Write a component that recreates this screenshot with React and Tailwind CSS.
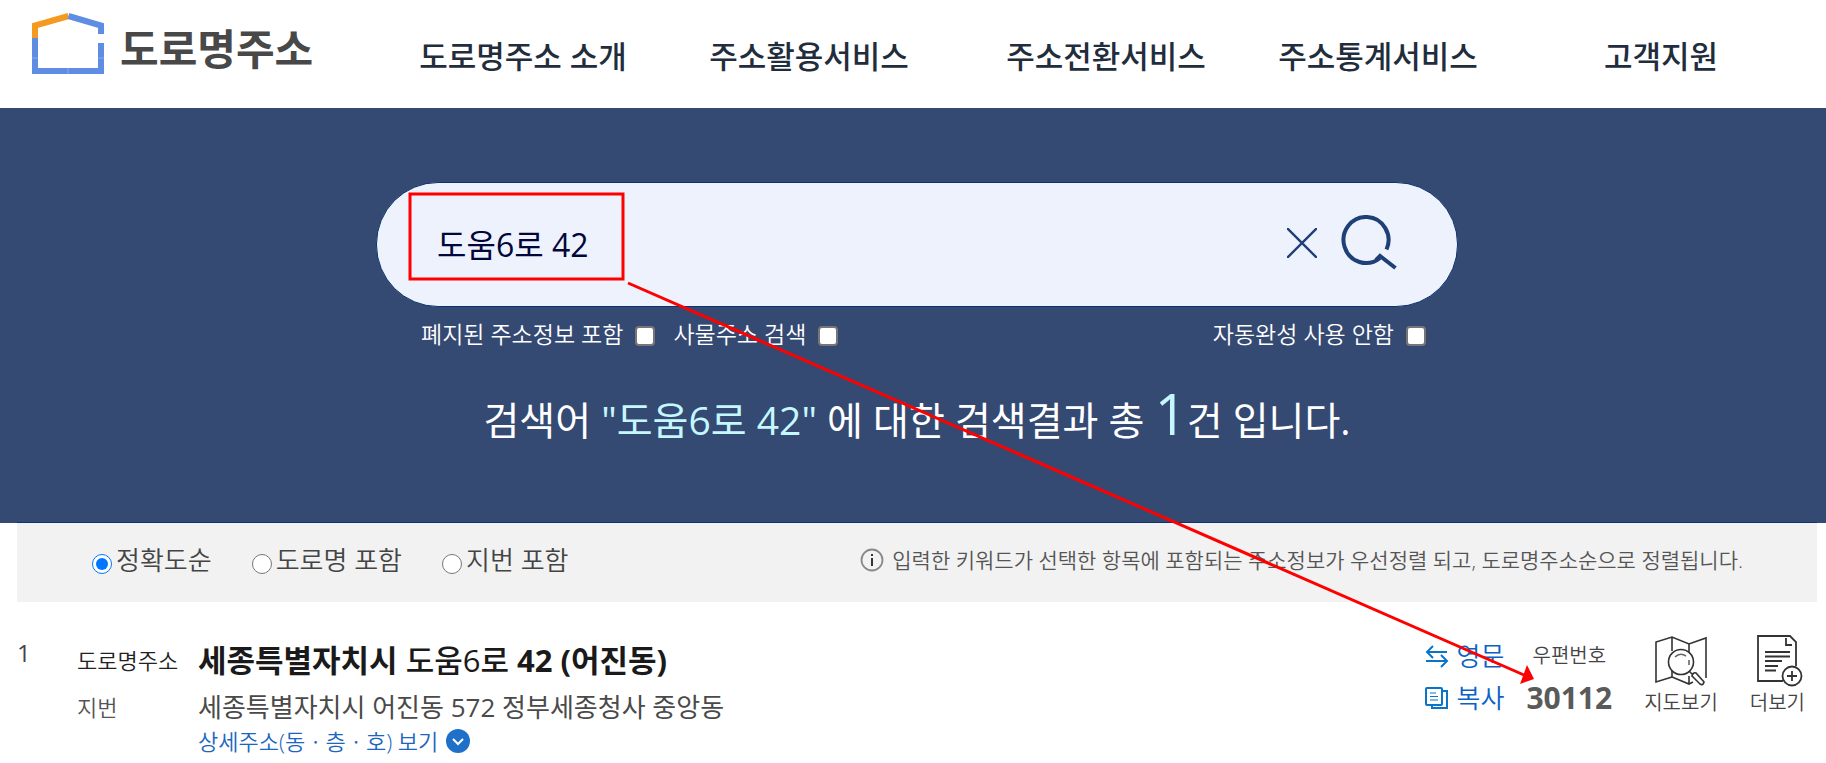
import { useState } from "react";

const menus = [
    "도로명주소 소개",
    "주소활용서비스",
    "주소전환서비스",
    "주소통계서비스",
    "고객지원",
];

const sortOptions = [
    { id: "accuracy", label: "정확도순" },
    { id: "road", label: "도로명 포함" },
    { id: "jibun", label: "지번 포함" },
];

function Logo() {
    return (
        <a href="#" className="flex w-[380px] shrink-0 items-end gap-4 pl-8 pt-[13px]">
            <svg width="72" height="61" viewBox="0 0 72 61" fill="none" strokeWidth="6" aria-hidden="true">
                <path d="M3 25V12.500L36.500 3" stroke="#f39a1f" />
                <path d="M36.500 3L69 12.500V21" stroke="#5f8de3" />
                <path d="M3 25V58H69V30" stroke="#5f8de3" />
                <path d="M0 45H6M66 45H72M36 55V61" stroke="#86aaf0" strokeWidth="1" />
            </svg>
            <span className="text-[42px] leading-[50px] font-bold text-[#484848]">도로명주소</span>
        </a>
    );
}

function Header() {
    return (
        <header className="flex h-[108px] bg-white">
            <div className="flex items-start">
                <Logo />
            </div>
            <nav className="grid flex-1 grid-cols-[286fr_286fr_308fr_236fr_330fr] items-center pt-1">
                {menus.map((menu) => (
                    <a key={menu} href="#" className="text-center text-[31px] leading-10 font-medium text-[#1f2d3d] whitespace-nowrap">
                        {menu}
                    </a>
                ))}
            </nav>
        </header>
    );
}

function CheckOption({ id, label }) {
    return (
        <div className="flex items-center gap-3">
            <label htmlFor={id} className="text-[23px] leading-8 font-[350]">{label}</label>
            <input
                id={id}
                type="checkbox"
                className="size-5 mt-1 appearance-none rounded-[4px] border-2 border-[#767676] bg-white checked:bg-[#0075ff]"
            />
        </div>
    );
}

function SearchArea() {
    const [keyword, setKeyword] = useState("도움6로 42");

    return (
        <section className="h-[415px] bg-[#354a73] pl-2 pt-[74px] text-white">
            <div className="mx-auto w-[1082px]">
                <form
                    onSubmit={(e) => e.preventDefault()}
                    className="flex h-[125px] items-center rounded-[62px] border border-[#0b3470] bg-[#eef2fd] px-[60px] pb-1"
                >
                    <input
                        type="text"
                        aria-label="주소 검색어"
                        value={keyword}
                        onChange={(e) => setKeyword(e.target.value)}
                        className="mt-1 min-w-0 flex-1 bg-transparent text-[32px] leading-10 text-[#03063a] outline-none"
                    />
                    <button type="button" aria-label="지우기" onClick={() => setKeyword("")} className="mr-6">
                        <svg width="30" height="30" viewBox="0 0 30 30" stroke="#1f3f77" strokeWidth="2.4">
                            <path d="M0 0L30 30M30 0L0 30" />
                        </svg>
                    </button>
                    <button type="submit" aria-label="검색">
                        <svg width="56" height="56" viewBox="0 0 56 56" fill="none" stroke="#1f3f77" strokeWidth="4">
                            <path d="M45.500 34.500A22.500 23 0 1 0 39 43" />
                            <path d="M35 45L39 41L54.500 53" />
                        </svg>
                    </button>
                </form>
                <div className="mt-[11px] flex items-center pl-[45px] pr-[32px]">
                    <CheckOption id="abolished" label="폐지된 주소정보 포함" />
                    <div className="ml-[18px]">
                        <CheckOption id="object" label="사물주소 검색" />
                    </div>
                    <div className="ml-auto">
                        <CheckOption id="autocomplete" label="자동완성 사용 안함" />
                    </div>
                </div>
            </div>
            <p className="mt-[27px] text-center text-[39px] leading-[72px]">
                검색어 <span className="text-[#c5f7ff]">"{"도움6로 42"}"</span> 에 대한 검색결과 총{" "}
                <span className="text-[56px] text-[#c5f7ff]">1</span>건 입니다.
            </p>
        </section>
    );
}

function SortBar() {
    const [sort, setSort] = useState("accuracy");

    return (
        <div className="ml-[17px] mr-[9px] -mt-px flex h-20 items-center justify-between border-t border-[#0b3470] bg-[#f2f2f2] pb-1.5 pl-[75px] pr-[74px]">
            <div className="flex gap-10">
                {sortOptions.map((option) => (
                    <label key={option.id} className="flex items-center gap-1 text-[26px] leading-9 font-[350] text-[#444]">
                        <input
                            type="radio"
                            name="sort"
                            checked={sort === option.id}
                            onChange={() => setSort(option.id)}
                            className="mt-2 size-5 accent-[#0075ff]"
                        />
                        {option.label}
                    </label>
                ))}
            </div>
            <p className="flex items-center gap-2 text-[21px] leading-8 font-[350] text-[#555]">
                <svg width="24" height="24" viewBox="0 0 24 24" fill="none" aria-hidden="true">
                    <circle cx="12" cy="12" r="10.500" stroke="#888" strokeWidth="1.8" />
                    <path d="M12 10V18M12 6V8" stroke="#333" strokeWidth="2" />
                </svg>
                입력한 키워드가 선택한 항목에 포함되는 주소정보가 우선정렬 되고, 도로명주소순으로 정렬됩니다.
            </p>
        </div>
    );
}

function SwapIcon() {
    return (
        <svg width="24" height="24" viewBox="0 0 24 24" fill="none" stroke="#0a74c9" strokeWidth="2" aria-hidden="true">
            <path d="M22 8H2M8 2L2 8L8 14M1 17H22M16 11L22 17L16 23" />
        </svg>
    );
}

function CopyIcon() {
    return (
        <svg width="24" height="24" viewBox="0 0 24 24" fill="none" stroke="#0a74c9" strokeWidth="2" aria-hidden="true">
            <rect x="1" y="2" width="16" height="17" rx="1" />
            <path d="M18 5H22V22H7V20" />
            <path d="M5 7H11M5 10.500H13M5 14H13" strokeWidth="1" />
        </svg>
    );
}

function MapIcon() {
    return (
        <svg width="52" height="52" viewBox="0 0 52 52" fill="none" stroke="#333" strokeWidth="1.6" aria-hidden="true">
            <path d="M17 42L1 47V7L17 2L34 9L51 3V43M17 2V16M34 9V18M17 35V42L34 49L38 47M34 41V49" />
            <circle cx="26" cy="27" r="12.500" fill="#fff" />
            <path d="M20 22Q25 17 31 21M34 25V30" stroke="#666" />
            <path d="M34 36L37 39M37 41L45 49Q48 51 49 47L41 38Q38 37 37 41Z" fill="#fff" />
        </svg>
    );
}

function MoreIcon() {
    return (
        <svg width="52" height="52" viewBox="-6 0 52 52" fill="none" stroke="#333" strokeWidth="1.8" aria-hidden="true">
            <path d="M26 46H1V1H33L39 7V31" />
            <path d="M29 3V10H35" />
            <path d="M8 17H33M8 21.500H33M8 26H25M8 31H21M8 35.500H19" />
            <circle cx="35" cy="41" r="9.500" fill="#fff" />
            <path d="M35 36V46M30 41H40" />
        </svg>
    );
}

function ResultRow() {
    return (
        <article className="flex pl-[17px] pr-[21px] pt-[33px] font-[350]">
            <span className="w-[60px] pt-0.5 text-[24px] leading-8 font-normal text-[#444]">1</span>
            <div className="flex-1">
                <div className="flex items-center">
                    <span className="w-[121px] text-[22px] leading-[50px] text-[#222]">도로명주소</span>
                    <h2 className="text-[31px] leading-[50px] font-bold text-[#1a1a1a]">
                        세종특별자치시 <span className="font-medium">도움6로</span> 42 (어진동)
                    </h2>
                </div>
                <div className="flex items-center">
                    <span className="w-[121px] text-[22px] leading-[44px] text-[#555]">지번</span>
                    <p className="text-[26px] leading-[44px] font-normal text-[#4a4a4a]">세종특별자치시 어진동 572 정부세종청사 중앙동</p>
                </div>
                <a href="#" className="ml-[121px] flex w-fit items-center gap-2 text-[22px] leading-6 text-[#1a66c0]">
                    상세주소(동ㆍ층ㆍ호) 보기
                    <svg width="24" height="24" viewBox="0 0 24 24" fill="none" aria-hidden="true">
                        <circle cx="12" cy="12" r="12" fill="#1f70c8" />
                        <path d="M7 10L12 15L17 10" stroke="#fff" strokeWidth="2" />
                    </svg>
                </a>
            </div>
            <div className="flex text-[#444]">
                <div className="mr-[22px] text-[26px] leading-[42px] text-[#0a62c4]">
                    <button type="button" className="flex items-center gap-2">
                        <SwapIcon />
                        영문
                    </button>
                    <button type="button" className="flex items-center gap-2">
                        <CopyIcon />
                        복사
                    </button>
                </div>
                <div className="mr-8 text-center">
                    <div className="text-[20px] leading-[42px]">우편번호</div>
                    <div className="text-[30px] leading-[42px] font-bold text-[#5a5a5a]">30112</div>
                </div>
                <button type="button" className="mr-8 flex flex-col items-center text-[20px] leading-8">
                    <MapIcon />
                    지도보기
                </button>
                <button type="button" className="flex flex-col items-center text-[20px] leading-8">
                    <MoreIcon />
                    더보기
                </button>
            </div>
        </article>
    );
}

// Pointer from the typed address to its postal code
function Callout() {
    return (
        <svg className="pointer-events-none absolute left-0 top-0" width="1826" height="763" fill="none" aria-hidden="true">
            <rect x="410" y="194" width="213" height="85" stroke="#f00" strokeWidth="3" />
            <path d="M628 283L1524 675" stroke="#f00" strokeWidth="3" />
            <path d="M1534 679L1520 684L1527 665Z" fill="#f00" />
        </svg>
    );
}

export default function App() {
    return (
        <div className="relative min-h-screen overflow-hidden bg-white font-['Open_Sans','Noto_Sans_CJK_KR',sans-serif]">
            <Header />
            <SearchArea />
            <SortBar />
            <ResultRow />
            <Callout />
        </div>
    );
}
